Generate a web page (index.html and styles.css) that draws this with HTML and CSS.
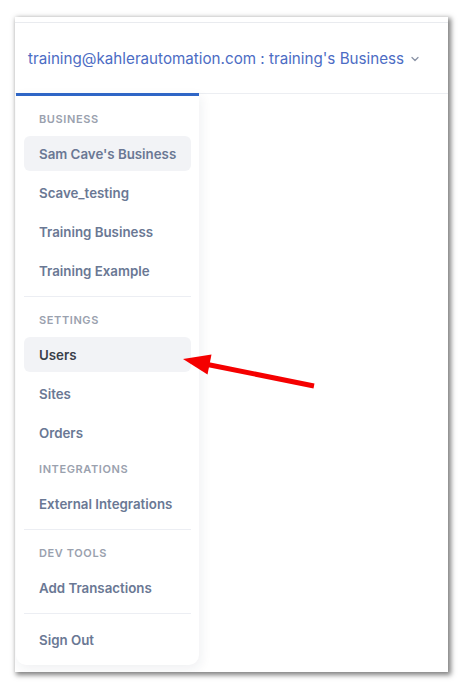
FILE: index.html
```html
<!DOCTYPE html>
<html lang="en">
<head>
    <meta charset="UTF-8">
    <meta name="viewport" content="width=device-width, initial-scale=1.0">
    <title>Account menu</title>
    <link rel="stylesheet" href="styles.css">
</head>
<body>
    <div class="shot">
        <div class="topline"></div>
        <div class="header">
            <span class="account">training@kahlerautomation.com : training's Business</span>
            <svg class="chevron" width="10" height="10" viewBox="0 0 10 10">
                <path d="M2 3.5 L5 6.5 L8 3.5" fill="none" stroke="#8a93a6" stroke-width="1.3" stroke-linecap="round" stroke-linejoin="round"/>
            </svg>
        </div>
        <div class="menu">
            <div class="label">Business</div>
            <div class="item active">Sam Cave's Business</div>
            <div class="item">Scave_testing</div>
            <div class="item">Training Business</div>
            <div class="item">Training Example</div>
            <div class="divider"></div>
            <div class="label">Settings</div>
            <div class="item active current">Users</div>
            <div class="item">Sites</div>
            <div class="item">Orders</div>
            <div class="label">Integrations</div>
            <div class="item">External Integrations</div>
            <div class="divider"></div>
            <div class="label">Dev Tools</div>
            <div class="item">Add Transactions</div>
            <div class="divider"></div>
            <div class="item">Sign Out</div>
        </div>
    </div>

    <!-- annotation arrow pointing at Users -->
    <svg class="arrow" width="463" height="689" viewBox="0 0 463 689">
        <line x1="314" y1="386" x2="205" y2="364" stroke="#f50000" stroke-width="5" stroke-linecap="butt"/>
        <polygon points="183,359 211.5,354.5 207.5,374.5" fill="#f50000"/>
    </svg>
</body>
</html>
```

FILE: styles.css
```css
body {
    margin: 0;
    padding: 17px 15px;
    background: #fff;
    font-family: Inter, "Noto Sans", Arial, sans-serif;
}
.shot {
    width: 433px;
    height: 655px;
    background: #fff;
    box-shadow: 2px 2px 5px 1px rgba(0, 0, 0, 0.5);
    overflow: hidden;
}
.topline {
    height: 5px;
    border-bottom: 1px solid #e9ebef;
}
.header {
    height: 70px;
    display: flex;
    align-items: center;
    padding-left: 13px;
    border-bottom: 1px solid #eceef2;
}
.account {
    font-size: 15.2px;
    color: #4c6cc4;
    white-space: nowrap;
}
.chevron {
    margin-left: 6px;
    margin-top: 2px;
}
.menu {
    width: 167px;
    margin-top: -1px;
    margin-left: 1px;
    padding: 8px;
    border-top: 3px solid #2f66c6;
    border-radius: 0 0 10px 10px;
    background: #fff;
    box-shadow: 2px 4px 12px rgba(30, 40, 70, 0.07);
    display: flex;
    flex-direction: column;
    gap: 4px;
}
.label {
    padding: 7px 15px 5px;
    line-height: 16px;
    font-size: 11px;
    font-weight: 600;
    letter-spacing: 0.6px;
    text-transform: uppercase;
    color: #9aa1ae;
}
.item {
    height: 35px;
    display: flex;
    align-items: center;
    padding: 0 15px;
    border-radius: 6px;
    font-size: 13.3px;
    font-weight: 600;
    color: #6a7894;
    white-space: nowrap;
}
.item.active {
    background: #f2f3f6;
}
.item.current {
    color: #3a3f4a;
}
.divider {
    height: 1px;
    margin: 4px 0;
    background: #eceef3;
}
.arrow {
    position: absolute;
    left: 0;
    top: 0;
    pointer-events: none;
}
```
